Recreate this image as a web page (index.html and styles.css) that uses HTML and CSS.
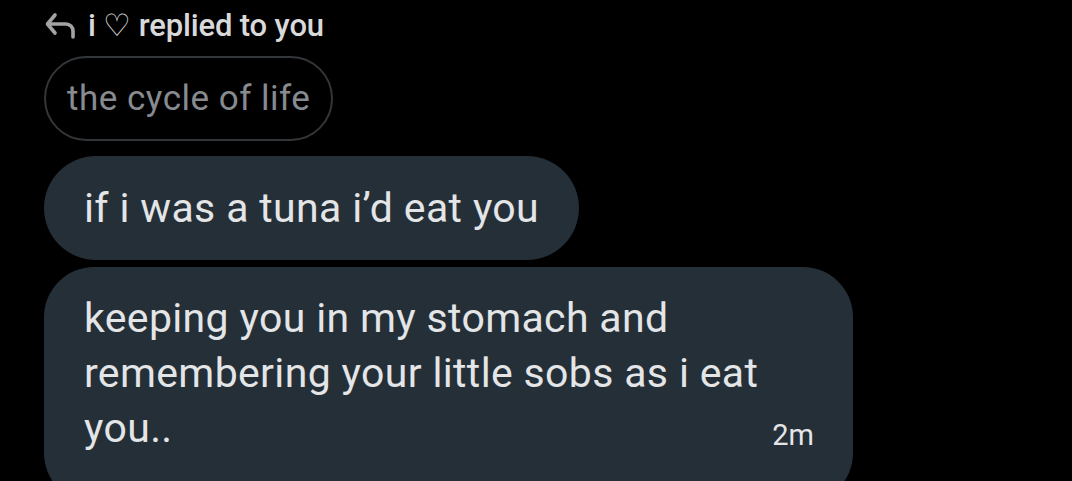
FILE: index.html
```html
<!DOCTYPE html>
<html>
<head>
<meta charset="utf-8">
<link rel="stylesheet" href="styles.css">
</head>
<body>
<div class="thread">
  <div class="reply-head">
    <svg class="reply-icon" viewBox="0 0 30 28" width="30" height="28">
      <path d="M10 4 L2.5 13 L10 22" fill="none" stroke="#a3a3a3" stroke-width="3.6" stroke-linecap="round" stroke-linejoin="round"/>
      <path d="M3 13 H21 A7 7 0 0 1 28 20 V26" fill="none" stroke="#a3a3a3" stroke-width="3.6" stroke-linecap="round"/>
    </svg>
    <span class="head-text">i ♡ replied to you</span>
  </div>
  <div class="quote">the cycle of life</div>
  <div class="bubble short">if i was a tuna i’d eat you</div>
  <div class="bubble long">keeping you in my stomach and remembering your little sobs as i eat you..<span class="time">2m</span></div>
</div>
</body>
</html>
```
FILE: styles.css
```css
html, body {
  margin: 0;
  padding: 0;
  background: #000;
  overflow: hidden;
}
body {
  width: 1072px;
  height: 481px;
  font-family: Roboto, "Noto Sans", sans-serif;
}
.thread {
  padding: 8px 0 0 44px;
  display: flex;
  flex-direction: column;
  align-items: flex-start;
}
.reply-head {
  display: flex;
  align-items: center;
  gap: 13px;
  height: 34px;
  padding-left: 1px;
}
.reply-icon {
  display: block;
}
.head-text {
  color: #d9d9d9;
  font-size: 31px;
  font-weight: 500;
  letter-spacing: -0.15px;
}
.quote {
  margin-top: 14px;
  height: 85px;
  box-sizing: border-box;
  border: 2px solid #333639;
  border-radius: 43px;
  padding: 0 21px;
  display: flex;
  align-items: center;
  color: #878b90;
  font-size: 35px;
  letter-spacing: 0.5px;
}
.bubble {
  background: #252f38;
  color: #e3e5e7;
  font-size: 41px;
  letter-spacing: 0.35px;
  box-sizing: border-box;
}
.short {
  margin-top: 15px;
  height: 104px;
  border-radius: 52px;
  padding: 0 40px;
  display: flex;
  align-items: center;
}
.long {
  margin-top: 7px;
  width: 809px;
  border-radius: 50px;
  padding: 24px 39px 40px 40px;
  line-height: 55px;
}
.time {
  float: right;
  font-size: 29px;
  letter-spacing: 0;
  color: #e3e5e7;
  margin-top: 7px;
}
```
